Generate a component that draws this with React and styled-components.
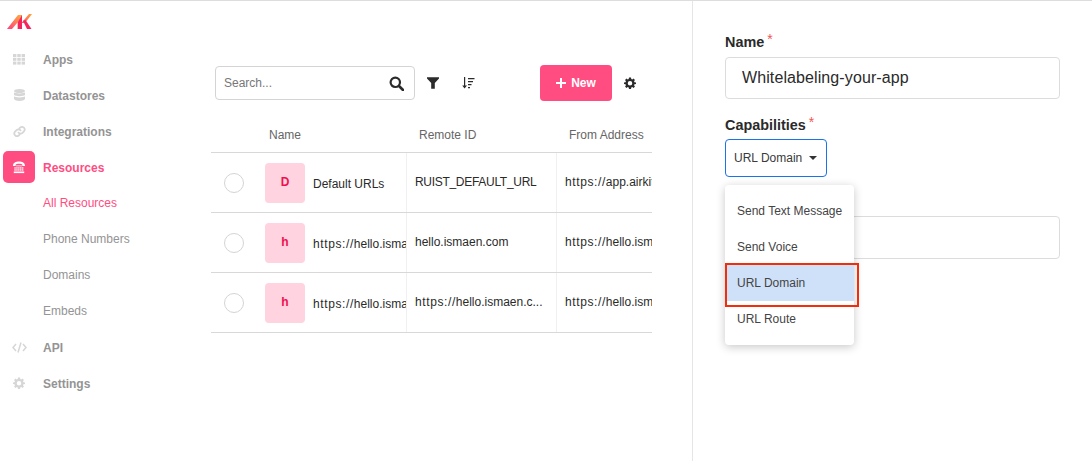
import React from 'react';
import styled, { createGlobalStyle } from 'styled-components';

const Global = createGlobalStyle`
  * { box-sizing: border-box; }
  html, body { margin: 0; padding: 0; background: #fff; }
  body { font-family: "Liberation Sans", Arial, sans-serif; overflow: hidden; }
`;

const Page = styled.div`
  display: flex;
  width: 1092px;
  height: 461px;
  border-top: 1px solid #dddddd;
  overflow: hidden;
`;

const Sidebar = styled.nav`
  width: 211px;
  flex: none;
  display: flex;
  flex-direction: column;
  padding-top: 12px;
`;

const Logo = styled.svg`
  display: block;
  flex: none;
  margin-left: 6px;
  margin-bottom: 12px;
`;

const NavRow = styled.div`
  display: flex;
  align-items: center;
  height: 36px;
  font-size: 12px;
  font-weight: 700;
  color: ${p => (p.$active ? '#ff4d82' : '#949494')};
`;

const NavIcon = styled.span`
  width: 32px;
  height: 32px;
  margin: 0 8px 2px 3px;
  flex: none;
  display: flex;
  align-items: center;
  justify-content: center;
  border-radius: 5px;
  background: ${p => (p.$active ? '#ff4d82' : 'transparent')};
  color: ${p => (p.$active ? '#fff' : '#d6d6d6')};
`;

const SubRow = styled.div`
  height: 36px;
  display: flex;
  align-items: center;
  padding: 0 0 2px 43px;
  font-size: 12px;
  color: ${p => (p.$active ? '#ff4d82' : '#949494')};
`;

const Main = styled.main`
  width: 482px;
  flex: none;
  border-right: 1px solid #e6e6e6;
  padding-top: 64px;
`;

const Toolbar = styled.div`
  display: flex;
  align-items: center;
  height: 36px;
  padding-left: 4px;
`;

const SearchBox = styled.div`
  width: 200px;
  height: 34px;
  display: flex;
  align-items: center;
  justify-content: space-between;
  padding: 0 10px 0 8px;
  border: 1px solid #d4d4d4;
  border-radius: 4px;
  font-size: 12px;
  color: #777;
`;

const ToolIcon = styled.span`
  display: flex;
  align-items: center;
  justify-content: center;
  margin-left: ${p => p.$gap}px;
  width: 16px;
  color: #2b2b2b;
`;

const NewButton = styled.button`
  width: 72px;
  height: 36px;
  margin-left: 64px;
  display: flex;
  align-items: center;
  justify-content: center;
  gap: 5px;
  border: 0;
  border-radius: 4px;
  background: #ff4d82;
  color: #fff;
  font: 700 12px "Liberation Sans", Arial, sans-serif;
`;

const Table = styled.div`
  width: 441px;
  margin-top: 19px;
  overflow: hidden;
`;

const Columns = styled.div`
  display: grid;
  grid-template-columns: 46px 150px 150px 150px;
  width: 496px;
  height: ${p => (p.$head ? '33px' : '60px')};
  border-bottom: 1px solid #d8d8d8;
  align-items: stretch;
`;

const HeadCell = styled.div`
  display: flex;
  align-items: center;
  padding: 0 0 2px 12px;
  font-size: 12px;
  color: #666;
`;

const Cell = styled.div`
  display: flex;
  align-items: center;
  min-width: 0;
  overflow: hidden;
  white-space: nowrap;
  padding: 0 0 1px 8px;
  border-right: 1px solid #f0f0f0;
  font-size: 12px;
  color: #2a2a2a;
`;

const CheckCell = styled.div`
  display: flex;
  align-items: center;
  justify-content: flex-end;
  padding: 0 13px 0 0;
`;

const Radio = styled.span`
  width: 20px;
  height: 20px;
  border: 1px solid #d4d4d4;
  border-radius: 50%;
`;

const Avatar = styled.span`
  width: 40px;
  height: 40px;
  flex: none;
  margin: 1px 8px 0 0;
  padding-bottom: 2px;
  display: flex;
  align-items: center;
  justify-content: center;
  border-radius: 4px;
  background: #ffd3e0;
  color: #f0104f;
  font-weight: 700;
  font-size: 12px;
`;

const NameText = styled.span`
  margin-top: 4px;
`;

const Scheme = styled.span`
  letter-spacing: 0.6px;
`;

const Constant = styled.span`
  letter-spacing: -0.3px;
`;

const Panel = styled.aside`
  flex: 1;
  padding: 31px 32px 0;
  position: relative;
`;

const Label = styled.div`
  font-size: 14.4px;
  font-weight: 700;
  line-height: 20px;
  color: #2a2a2a;
`;

const Req = styled.sup`
  color: #f25555;
  font-size: 14px;
  font-weight: 400;
  line-height: 0;
  margin-left: 3px;
  vertical-align: 3px;
`;

const TextField = styled.div`
  height: 42px;
  margin-top: 5px;
  margin-bottom: 16px;
  padding: 0 16px;
  display: flex;
  align-items: center;
  border: 1px solid #dcdcdc;
  border-radius: 4px;
  font-size: 16px;
  letter-spacing: 0.1px;
  color: #2a2a2a;
`;

const SelectBox = styled.div`
  width: 102px;
  height: 38px;
  margin-top: 4px;
  padding: 0 8px;
  display: flex;
  align-items: center;
  justify-content: space-between;
  border: 1px solid #1a73e8;
  border-radius: 4px;
  font-size: 12px;
  color: #3a3a3a;
`;

const Caret = styled.span`
  width: 0;
  height: 0;
  border-left: 4px solid transparent;
  border-right: 4px solid transparent;
  border-top: 4px solid #333;
  margin-right: 1px;
`;

const GhostField = styled.div`
  height: 43px;
  margin-top: 39px;
  border: 1px solid #dcdcdc;
  border-radius: 4px;
`;

const Menu = styled.div`
  position: absolute;
  left: 32px;
  top: 184px;
  width: 129px;
  height: 160px;
  padding-top: 8px;
  background: #fff;
  border-radius: 4px;
  box-shadow: 0 2px 10px rgba(0, 0, 0, 0.22);
`;

const MenuItem = styled.div`
  height: 36px;
  padding-left: 12px;
  display: flex;
  align-items: center;
  font-size: 12px;
  color: #444;
  background: ${p => (p.$selected ? '#cfe1f8' : 'transparent')};
`;

const Highlight = styled.div`
  position: absolute;
  left: 0;
  top: 78px;
  width: 134px;
  height: 44px;
  border: 2px solid #f32c0a;
`;

const Gear = ({ size = 12, color = 'currentColor' }) => (
  <svg width={size} height={size} viewBox="0 0 24 24" fill={color}>
    <path fillRule="evenodd" d="M10 1h4l.6 3.100 1.900.8 2.600-1.800 2.800 2.800-1.800 2.600.8 1.900L24 11v3l-3.100.6-.8 1.900 1.800 2.600-2.800 2.800-2.600-1.800-1.900.8L14 24h-4l-.6-3.100-1.900-.8-2.600 1.800-2.800-2.800 1.800-2.600-.8-1.900L0 14v-3l3.100-.6.8-1.900L2.100 5.900l2.800-2.800 2.600 1.800 1.900-.8zM12 8a4.500 4.500 0 1 0 0 9 4.500 4.500 0 0 0 0-9z" />
  </svg>
);

const Icons = {
  apps: (
    <svg width="12" height="11" viewBox="0 0 12 11" fill="currentColor">
      {[0, 4.3, 8.6].flatMap(x => [0, 3.8, 7.6].map(y => <rect key={`${x}-${y}`} x={x} y={y} width="3.400" height="3" />))}
    </svg>
  ),
  db: (
    <svg width="11" height="12" viewBox="0 0 11 12" fill="currentColor">
      <ellipse cx="5.500" cy="2" rx="5.500" ry="2" />
      <path d="M0 3.300C1 4.800 10 4.800 11 3.300V6C10 7.500 1 7.500 0 6zM0 7.300C1 8.800 10 8.800 11 7.300V10C10 12.600 1 12.600 0 10z" />
    </svg>
  ),
  link: (
    <svg width="13" height="13" viewBox="0 0 24 24" fill="none" stroke="currentColor" strokeWidth="3.200" strokeLinecap="round">
      <path d="M10 14a5 5 0 0 0 7.500.5l3-3a5 5 0 0 0-7-7l-1.700 1.700" />
      <path d="M14 10a5 5 0 0 0-7.500-.5l-3 3a5 5 0 0 0 7 7l1.700-1.700" />
    </svg>
  ),
  phone: (
    <svg width="12" height="13" viewBox="0 0 12 13" fill="currentColor">
      <path d="M0 5C0 1.500 3 .5 6 .5s6 1 6 4.500H9.300V3.500C8.500 2.500 3.500 2.500 2.700 3.500V5z" />
      <path d="M3.400 4h5.200l.5 1.400H2.900z" opacity="0.55" />
      {[6.300, 8.300].flatMap(y => [1.300, 3.200, 5.100, 7, 8.900].map(x => <rect key={`${x}-${y}`} x={x} y={y} width="1.500" height="1.300" />))}
      <rect x=".8" y="10.500" width="10.400" height="1.600" />
    </svg>
  ),
  code: (
    <svg width="15" height="11" viewBox="0 0 15 11" fill="none" stroke="currentColor" strokeWidth="1.500">
      <path d="M4 2 1 5.500 4 9M11 2l3 3.500L11 9M9 .5l-3 10" />
    </svg>
  ),
};

const SearchIcon = () => (
  <svg width="15" height="15" viewBox="0 0 15 15" fill="none" stroke="#2b2b2b">
    <circle cx="6.300" cy="6.300" r="4.700" strokeWidth="2.200" />
    <path d="M10 10l4 4" strokeWidth="2.600" strokeLinecap="round" />
  </svg>
);

const FilterIcon = () => (
  <svg width="12" height="12" viewBox="0 0 12 12" fill="#2b2b2b">
    <path d="M0 .3h12v1.200L7.800 6v5.700H4.200V6L0 1.500z" />
  </svg>
);

const SortIcon = () => (
  <svg width="13" height="12" viewBox="0 0 13 12" fill="#2b2b2b">
    <path d="M2 0h1.200v8.500H5L2.600 11.500 .2 8.500H2z" />
    <path d="M6 1h6.500v1.300H6zM6 4h5v1.300H6zM6 7h3.500v1.300H6zM6 10h2v1.300H6z" />
  </svg>
);

const LogoMark = () => (
  <Logo width="26" height="17" viewBox="0 0 26 17">
    <defs>
      <linearGradient id="lg" x1="0" y1="1" x2="1" y2="0">
        <stop offset="0" stopColor="#ff3d7f" />
        <stop offset="1" stopColor="#ffb03a" />
      </linearGradient>
      <linearGradient id="lk" x1="0" y1="1" x2="1" y2="0">
        <stop offset="0" stopColor="#ff4d6a" />
        <stop offset="1" stopColor="#ffa53a" />
      </linearGradient>
    </defs>
    <path d="M1 16 12 2h4v14h-4.500V9.500L6 16z" fill="url(#lg)" />
    <path d="M16 2h0v14h-4V9z" fill="#f5245f" />
    <path d="M15.500 10 23 1h3l-7 9z" fill="url(#lk)" />
    <path d="M17 7.800 19.500 7 25.500 16h-4.500z" fill="#f5245f" />
  </Logo>
);

const Url = ({ value }) =>
  value.startsWith('https://') ? (
    <span><Scheme>https://</Scheme>{value.slice(8)}</span>
  ) : (
    <span>{value}</span>
  );

const rows = [
  { letter: 'D', name: 'Default URLs', remote: <Constant>RUIST_DEFAULT_URL</Constant>, from: 'https://app.airkit.com' },
  { letter: 'h', name: 'https://hello.ismaen.com', remote: <Url value="hello.ismaen.com" />, from: 'https://hello.ismaen.com' },
  { letter: 'h', name: 'https://hello.ismaen.com', remote: <Url value="https://hello.ismaen.c..." />, from: 'https://hello.ismaen.com' },
];

export default function App() {
  return (
    <Page>
      <Global />
      <Sidebar>
        <LogoMark />
        <NavRow><NavIcon>{Icons.apps}</NavIcon>Apps</NavRow>
        <NavRow><NavIcon>{Icons.db}</NavIcon>Datastores</NavRow>
        <NavRow><NavIcon>{Icons.link}</NavIcon>Integrations</NavRow>
        <NavRow $active><NavIcon $active>{Icons.phone}</NavIcon>Resources</NavRow>
        <SubRow $active>All Resources</SubRow>
        <SubRow>Phone Numbers</SubRow>
        <SubRow>Domains</SubRow>
        <SubRow>Embeds</SubRow>
        <NavRow><NavIcon>{Icons.code}</NavIcon>API</NavRow>
        <NavRow><NavIcon><Gear /></NavIcon>Settings</NavRow>
      </Sidebar>
      <Main>
        <Toolbar>
          <SearchBox>Search...<SearchIcon /></SearchBox>
          <ToolIcon $gap={10}><FilterIcon /></ToolIcon>
          <ToolIcon $gap={19}><SortIcon /></ToolIcon>
          <NewButton>
            <svg width="10" height="10" viewBox="0 0 10 10" stroke="#fff" strokeWidth="2"><path d="M5 0v10M0 5h10" /></svg>
            New
          </NewButton>
          <ToolIcon $gap={10}><Gear size={12} color="#2b2b2b" /></ToolIcon>
        </Toolbar>
        <Table>
          <Columns $head>
            <HeadCell />
            <HeadCell>Name</HeadCell>
            <HeadCell>Remote ID</HeadCell>
            <HeadCell>From Address</HeadCell>
          </Columns>
          {rows.map((r, i) => (
            <Columns key={i}>
              <CheckCell><Radio /></CheckCell>
              <Cell>
                <Avatar>{r.letter}</Avatar>
                <NameText><Url value={r.name} /></NameText>
              </Cell>
              <Cell>{r.remote}</Cell>
              <Cell><Url value={r.from} /></Cell>
            </Columns>
          ))}
        </Table>
      </Main>
      <Panel>
        <Label>Name<Req>*</Req></Label>
        <TextField>Whitelabeling-your-app</TextField>
        <Label>Capabilities<Req>*</Req></Label>
        <SelectBox>URL Domain<Caret /></SelectBox>
        <GhostField />
        <Menu>
          <MenuItem>Send Text Message</MenuItem>
          <MenuItem>Send Voice</MenuItem>
          <MenuItem $selected>URL Domain</MenuItem>
          <MenuItem>URL Route</MenuItem>
          <Highlight />
        </Menu>
      </Panel>
    </Page>
  );
}
